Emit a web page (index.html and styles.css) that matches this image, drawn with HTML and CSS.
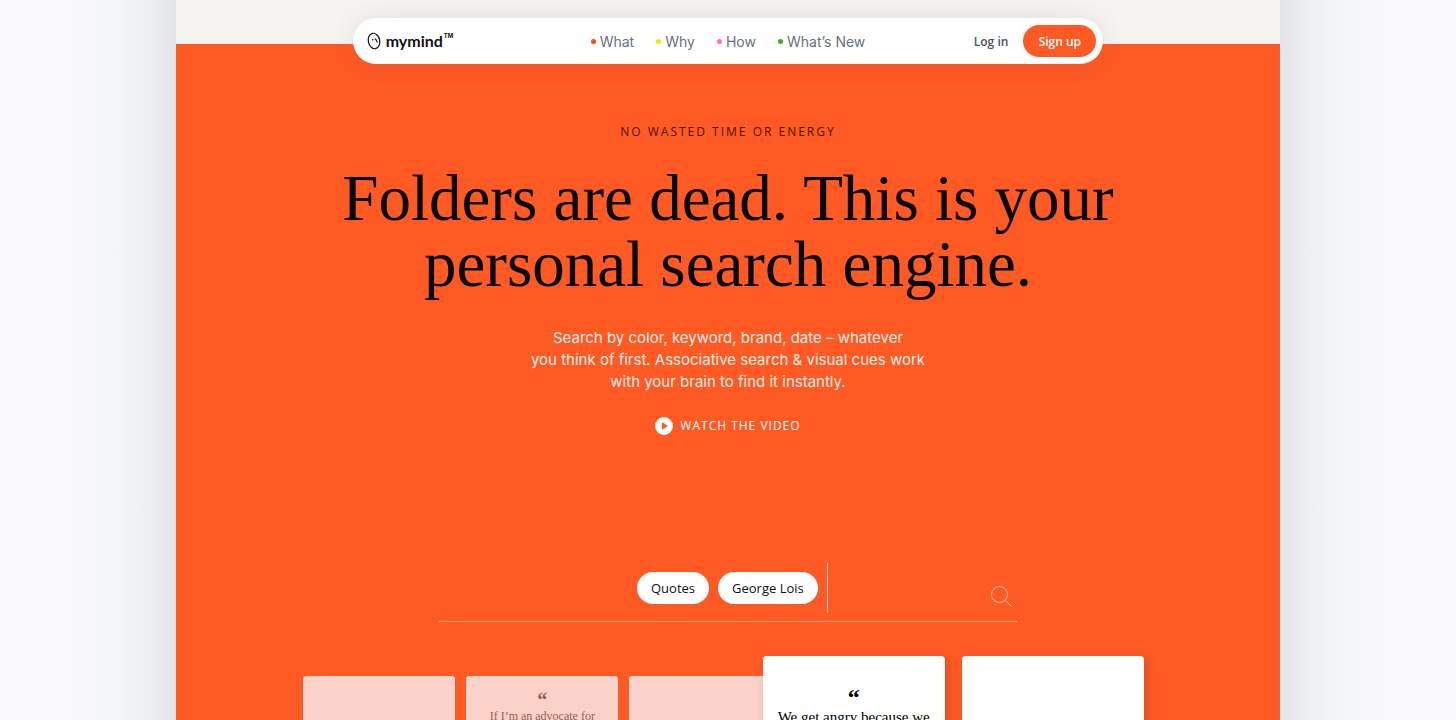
FILE: index.html
```html
<!DOCTYPE html>
<html lang="en">
<head>
  <meta charset="UTF-8">
  <meta name="viewport" content="width=device-width, initial-scale=1.0">
  <title>mymind</title>
  <link rel="stylesheet" href="styles.css">
</head>
<body>
  <div class="page">
    <header class="navbar">
      <a class="logo" href="#">
        <svg width="14" height="18" viewBox="0 0 14 18" fill="none" stroke="#111" stroke-linecap="round">
          <ellipse cx="7" cy="9" rx="5.7" ry="7.8" stroke-width="1.2" transform="rotate(-12 7 9)"/>
          <circle cx="5.6" cy="7.7" r="0.8" fill="#111" stroke="none"/>
          <path d="M8 7.2c.7-.2 1 .1 1.2.7l.4 1.3c.1.4.4.7.8.8" stroke-width="1.1"/>
        </svg>
        <span class="logo-name">mymind</span>
        <span class="logo-tm">TM</span>
      </a>
      <nav class="menu">
        <a class="red" href="#">What</a>
        <a class="yellow" href="#">Why</a>
        <a class="pink" href="#">How</a>
        <a class="green" href="#">What’s New</a>
      </nav>
      <div class="account">
        <a class="login" href="#">Log in</a>
        <button class="signup">Sign up</button>
      </div>
    </header>

    <main class="hero">
      <p class="eyebrow">No wasted time or energy</p>
      <h1>Folders are dead. This is your<br>personal search engine.</h1>
      <p class="intro">Search by color, keyword, brand, date – whatever<br>you think of first. Associative search &amp; visual cues work<br>with your brain to find it instantly.</p>
      <button class="watch">
        <svg width="18" height="18" viewBox="0 0 18 18">
          <circle cx="9" cy="9" r="9" fill="#fff"/>
          <path d="M7 5.8v6.4a.4.4 0 0 0 .6.3l4.6-3.1a.5.5 0 0 0 0-.8L7.6 5.5a.4.4 0 0 0-.6.3z" fill="#ff5924"/>
        </svg>
        Watch the video
      </button>

      <form class="search">
        <button type="button" class="tag">Quotes</button>
        <button type="button" class="tag">George Lois</button>
        <input type="text" aria-label="Search">
        <button type="button" class="search-icon" aria-label="Submit search">
          <svg width="22" height="22" viewBox="0 0 22 22" fill="none" stroke="#ffc3ae" stroke-width="1">
            <circle cx="9.5" cy="9.5" r="8"/>
            <path d="M15.3 15.3l6 6"/>
          </svg>
        </button>
      </form>

      <section class="cards">
        <article class="card faded"></article>
        <article class="card faded">
          <span class="mark">“</span>
          <p>If I’m an advocate for</p>
        </article>
        <article class="card faded"></article>
        <article class="card big overlap">
          <span class="mark">“</span>
          <p>We get angry because we</p>
        </article>
        <article class="card big"></article>
      </section>
    </main>
  </div>
</body>
</html>
```

FILE: styles.css
```css
* {
  box-sizing: border-box;
}

body {
  display: grid;
  grid-template-columns: 1fr minmax(0, 1104px) 1fr;
  margin: 0;
  background-color: #f9f9fb;
  font-family: Inter, "Liberation Sans", sans-serif;
  overflow: hidden;
}

/* soft shade on both sides of the page */
body::before,
body::after {
  content: "";
  background: linear-gradient(to left, #e3e5e6, #eceeef 24px, #f5f6f7 60px, #f9f9fb 110px);
}

body::after {
  background: linear-gradient(to right, #e3e5e6, #eceeef 24px, #f5f6f7 60px, #f9f9fb 110px);
}

a {
  color: inherit;
  text-decoration: none;
}

button {
  padding: 0;
  border: none;
  background: none;
  font-family: "Open Sans", sans-serif;
  cursor: pointer;
}

.page {
  display: flex;
  flex-direction: column;
  align-items: center;
  height: 100vh;
  padding-top: 18px;
  overflow: hidden;
  background: linear-gradient(#f6f3f1 44px, #ff5924 44px);
}

.navbar {
  display: grid;
  grid-template-columns: 1fr auto 1fr;
  align-items: center;
  flex-shrink: 0;
  width: 68%;
  min-height: 46px;
  padding: 0 7px;
  border-radius: 23px;
  background-color: #fff;
  box-shadow: 0 0 24px rgba(70, 80, 70, 0.12);
}

.logo {
  display: flex;
  align-items: center;
  margin-left: 7px;
  color: #111;
}

.logo-name {
  margin-left: 5px;
  font-family: Lato, sans-serif;
  font-size: 16px;
  font-weight: 700;
  line-height: 18px;
}

.logo-tm {
  align-self: flex-start;
  margin-left: 1px;
  font-size: 6px;
  font-weight: 700;
}

.menu {
  display: flex;
  gap: 22px;
  color: #667080;
  font-size: 14px;
}

.menu a {
  display: flex;
  align-items: center;
  gap: 4px;
}

.menu a::before {
  content: "";
  width: 5px;
  height: 5px;
  border-radius: 50%;
}

.menu .red::before {
  background-color: #ff4b14;
}

.menu .yellow::before {
  background-color: #ffe000;
}

.menu .pink::before {
  background-color: #ff6fd0;
}

.menu .green::before {
  background-color: #43ac23;
}

.account {
  display: flex;
  align-items: center;
  justify-content: flex-end;
  gap: 15px;
  font-family: "Open Sans", sans-serif;
  font-size: 12px;
}

.login {
  color: #475063;
  font-weight: 600;
}

.signup {
  width: 73px;
  height: 32px;
  border-radius: 16px;
  background-color: #ff5924;
  color: #fff;
  font-size: 12px;
  font-weight: 600;
}

.hero {
  display: flex;
  flex-direction: column;
  align-items: center;
  width: 100%;
  padding-top: 60px;
  text-align: center;
}

.eyebrow {
  margin: 0;
  color: #481607;
  font-family: "Open Sans", sans-serif;
  font-size: 12px;
  line-height: 16px;
  letter-spacing: 2px;
  text-transform: uppercase;
}

h1 {
  margin: 25px 0 0;
  color: #050505;
  font-family: "Liberation Serif", serif;
  font-size: 65px;
  font-weight: 400;
  line-height: 66px;
  white-space: nowrap;
}

.intro {
  margin: 30px 0 0;
  color: #fff0e9;
  font-size: 15px;
  line-height: 22px;
}

.watch {
  display: flex;
  align-items: center;
  gap: 7px;
  margin-top: 24px;
  color: #fff;
  font-size: 12px;
  line-height: 18px;
  letter-spacing: 1px;
  text-transform: uppercase;
}

.search {
  display: flex;
  align-items: center;
  width: 578px;
  margin-top: 128px;
  padding: 0 5px 8px 198px;
  border-bottom: 1px solid #ffa486;
}

.tag {
  flex-shrink: 0;
  height: 32px;
  margin-right: 9px;
  padding: 0 14px;
  border-radius: 16px;
  background-color: #fff;
  color: #111;
  font-size: 13px;
}

.search input {
  flex: 1;
  min-width: 0;
  height: 50px;
  padding: 0 12px;
  border: none;
  border-left: 1px solid #ffd5c8;
  outline: none;
  background: none;
  color: #fff;
  font-size: 14px;
}

.search-icon {
  align-self: flex-end;
  padding-bottom: 6px;
  line-height: 0;
}

.cards {
  display: flex;
  align-items: flex-start;
  gap: 11px;
  width: 100%;
  margin-top: 34px;
  padding: 0 136px 0 127px;
}

.card {
  flex: 152 1 0;
  min-width: 0;
  min-height: 180px;
  border-radius: 4px;
  background-color: #fff;
  font-family: "Liberation Serif", serif;
  white-space: nowrap;
}

.card p {
  margin: 0;
}

.faded {
  margin-top: 20px;
  padding-top: 16px;
  background-color: #fad2ca;
  box-shadow: inset 0 0 0 1px #fbdcd4;
  color: #946158;
  font-size: 12px;
  line-height: 16px;
}

.big {
  flex-grow: 182;
  min-height: 220px;
  margin-left: 6px;
  padding-top: 33px;
  box-shadow: 3px 4px 10px rgba(110, 50, 30, 0.25);
  font-size: 15px;
  line-height: 20px;
}

/* sits on the edge of the card before it */
.overlap {
  margin-left: -30px;
}

.mark {
  display: block;
  height: 16px;
  font-size: 20px;
  font-weight: 700;
  line-height: 16px;
}

.big .mark {
  height: 18px;
  font-size: 24px;
}
```
